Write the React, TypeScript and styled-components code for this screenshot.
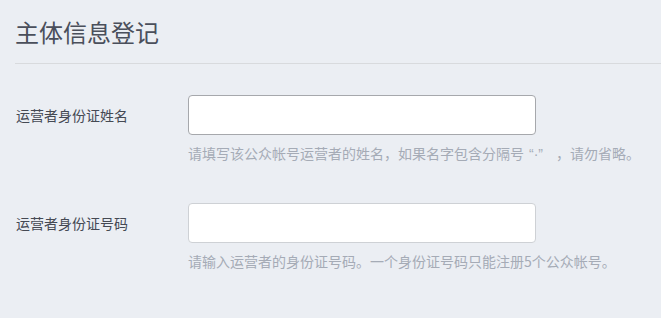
import React from 'react';
import styled, { createGlobalStyle } from 'styled-components';

const GlobalStyle = createGlobalStyle`
  html, body {
    margin: 0;
    padding: 0;
    background: #ebeef3;
  }
  body {
    font-family: "Noto Sans CJK SC", "Noto Sans", sans-serif;
  }
`;

const Page = styled.div`
  padding-left: 15px;
`;

const Header = styled.div`
  height: 63px;
  display: flex;
  align-items: center;
  border-bottom: 1px solid #d8dadd;
`;

const Title = styled.h2`
  margin: 0;
  font-size: 24px;
  font-weight: 400;
  color: #4a4f5b;
  line-height: 32px;
  padding-top: 1px;
`;

const Form = styled.div`
  padding-top: 31px;
  display: flex;
  flex-direction: column;
  gap: 39px;
`;

const Row = styled.div`
  display: grid;
  grid-template-columns: 173px 348px;
`;

const Label = styled.label`
  font-size: 14px;
  line-height: 40px;
  color: #454953;
  padding-left: 1px;
`;

const Input = styled.input<{ $active?: boolean }>`
  box-sizing: border-box;
  width: 348px;
  height: 40px;
  border: 1px solid ${(p) => (p.$active ? '#a6a8ac' : '#ced1d5')};
  border-radius: 4px;
  background: #fff;
  outline: none;
  padding: 0 10px;
  font-size: 14px;
  font-family: inherit;
`;

const Hint = styled.p`
  grid-column: 2;
  margin: 8px 0 0;
  font-size: 14px;
  line-height: 20px;
  color: #a5abb6;
  white-space: nowrap;
`;

// narrow latin quotes, as in the original
const Quote = styled.span`
  font-family: "Liberation Sans", Arial, sans-serif;
  margin: 0 13px 0 5px;
`;

const App = () => {
  return (
    <Page>
      <GlobalStyle />
      <Header>
        <Title>主体信息登记</Title>
      </Header>
      <Form>
        <Row>
          <Label>运营者身份证姓名</Label>
          <Input $active />
          <Hint>
            请填写该公众帐号运营者的姓名，如果名字包含分隔号<Quote>“·”</Quote>，请勿省略。
          </Hint>
        </Row>
        <Row>
          <Label>运营者身份证号码</Label>
          <Input />
          <Hint>请输入运营者的身份证号码。一个身份证号码只能注册5个公众帐号。</Hint>
        </Row>
      </Form>
    </Page>
  );
};

export default App;
